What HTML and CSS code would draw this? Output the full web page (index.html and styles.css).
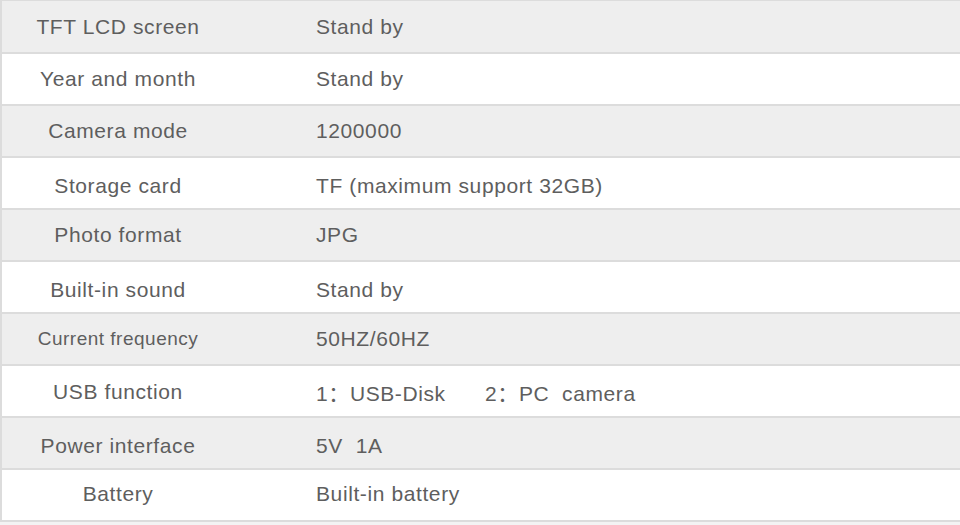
FILE: index.html
```html
<!DOCTYPE html>
<html>
<head>
<meta charset="utf-8">
<link rel="stylesheet" href="styles.css">
</head>
<body>
<div class="spec">
  <div class="row"><div class="k">TFT LCD screen</div><div class="v">Stand by</div></div>
  <div class="row"><div class="k">Year and month</div><div class="v">Stand by</div></div>
  <div class="row"><div class="k">Camera mode</div><div class="v">1200000</div></div>
  <div class="row low"><div class="k">Storage card</div><div class="v">TF (maximum support 32GB)</div></div>
  <div class="row"><div class="k">Photo format</div><div class="v">JPG</div></div>
  <div class="row low"><div class="k">Built-in sound</div><div class="v">Stand by</div></div>
  <div class="row"><div class="k small">Current frequency</div><div class="v">50HZ/60HZ</div></div>
  <div class="row mid"><div class="k">USB function</div><div class="v"><span class="opt">1：USB-Disk</span><span class="opt">2：PC  camera</span></div></div>
  <div class="row low"><div class="k">Power interface</div><div class="v">5V  1A</div></div>
  <div class="row up"><div class="k">Battery</div><div class="v">Built-in battery</div></div>
</div>
</body>
</html>
```

FILE: styles.css
```css
html, body {
  margin: 0;
  padding: 0;
  background: #f3f3f3;
}
body {
  width: 960px;
  height: 525px;
  overflow: hidden;
  font-family: "Liberation Sans", "Noto Sans CJK SC", sans-serif;
  color: #5e5e5e;
}
.spec {
  border-top: 1px solid #dcdcdc;
  border-left: 2px solid #dcdcdc;
}
.row {
  display: grid;
  grid-template-columns: 232px 1fr;
  height: 50px;
  border-bottom: 2px solid #dcdcdc;
  background: #fff;
  align-items: center;
  font-size: 21px;
  letter-spacing: 0.6px;
}
.row:nth-child(odd) {
  background: #eeeeee;
}
.row:first-child {
  height: 51px;
}
.k {
  text-align: center;
}
.k.small {
  font-size: 19px;
  letter-spacing: 0.5px;
}
.v {
  padding-left: 82px;
  white-space: pre;
}
.opt {
  display: inline-block;
}
.opt:first-child {
  width: 169px;
}
.low .k, .low .v {
  padding-top: 5px;
}
.mid .k, .mid .v {
  padding-top: 1px;
}
.up .k, .up .v {
  padding-bottom: 2px;
}
```
